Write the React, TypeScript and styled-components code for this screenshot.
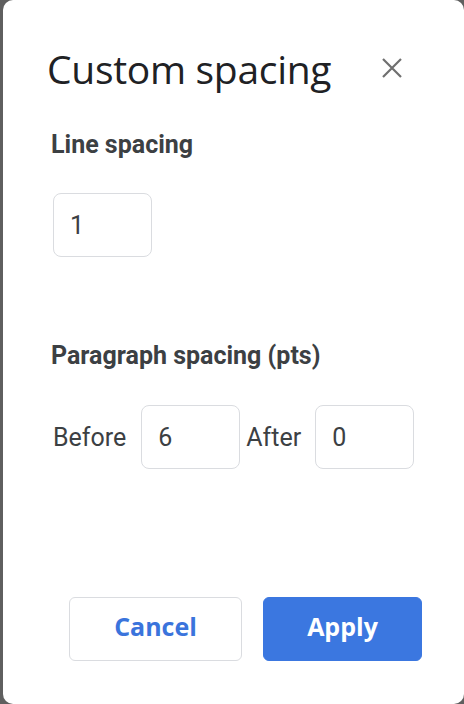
import React from 'react';
import styled, { createGlobalStyle } from 'styled-components';

const GlobalStyle = createGlobalStyle`
  html, body {
    margin: 0;
    padding: 0;
    background: #5f5f5f;
  }
  * {
    box-sizing: border-box;
  }
`;

const Backdrop = styled.div`
  display: flex;
  width: 464px;
  height: 704px;
  padding-left: 3px;
  background: #5f5f5f;
  overflow: hidden;
`;

const Dialog = styled.div`
  display: flex;
  flex-direction: column;
  width: 461px;
  height: 704px;
  background: #fff;
  border-radius: 10px;
  padding: 44px 0 0 44px;
  color: #3c4043;
  font-family: Roboto, 'Liberation Sans', sans-serif;
`;

const Header = styled.div`
  display: flex;
  align-items: center;
  justify-content: space-between;
  padding-right: 60px;
  height: 48px;
`;

const Title = styled.h1`
  margin: 0;
  font-family: 'Open Sans', sans-serif;
  font-weight: 400;
  font-size: 39px;
  color: #202124;
  letter-spacing: -0.3px;
`;

const CloseButton = styled.button`
  display: flex;
  border: none;
  background: none;
  padding: 0;
  cursor: pointer;
`;

const SectionLabel = styled.h2<{ $top: number }>`
  margin: ${p => p.$top}px 0 0 4px;
  font-size: 25px;
  font-weight: 700;
  line-height: 30px;
  color: #3c4043;
`;

const Row = styled.div<{ $top: number }>`
  display: flex;
  align-items: center;
  margin: ${p => p.$top}px 0 0 6px;
`;

const FieldLabel = styled.span<{ $gap: number }>`
  font-size: 25px;
  color: #3c4043;
  margin-right: ${p => p.$gap}px;
`;

const NumberBox = styled.input<{ $gap?: number }>`
  width: 99px;
  height: 64px;
  border: 1px solid #dadce0;
  border-radius: 8px;
  padding: 0 0 0 16px;
  font-family: Roboto, 'Liberation Sans', sans-serif;
  font-size: 25px;
  color: #3c4043;
  background: #fff;
  outline: none;
  margin-right: ${p => p.$gap ?? 0}px;
`;

const Footer = styled.div`
  display: flex;
  gap: 21px;
  margin: auto 0 43px 22px;
`;

const Button = styled.button<{ $primary?: boolean }>`
  height: 64px;
  width: ${p => (p.$primary ? 159 : 173)}px;
  border-radius: 6px;
  border: 1px solid ${p => (p.$primary ? '#3b77e0' : '#dadce0')};
  background: ${p => (p.$primary ? '#3b77e0' : '#fff')};
  color: ${p => (p.$primary ? '#fff' : '#3a74dc')};
  font-family: 'Open Sans', sans-serif;
  font-weight: 700;
  font-size: 25px;
  padding: 0 0 6px;
  cursor: pointer;
`;

const App = () => (
  <>
    <GlobalStyle />
    <Backdrop>
      <Dialog>
        <Header>
          <Title>Custom spacing</Title>
          <CloseButton aria-label="Close">
            <svg width="24" height="24" viewBox="0 0 24 24">
              <path d="M3 3L21 21M21 3L3 21" stroke="#6f6f6f" strokeWidth="2.2" fill="none" />
            </svg>
          </CloseButton>
        </Header>

        <SectionLabel $top={38}>Line spacing</SectionLabel>
        <Row $top={33}>
          <NumberBox defaultValue="1" />
        </Row>

        <SectionLabel $top={84}>Paragraph spacing (pts)</SectionLabel>
        <Row $top={34}>
          <FieldLabel $gap={15}>Before</FieldLabel>
          <NumberBox defaultValue="6" $gap={6} />
          <FieldLabel $gap={14}>After</FieldLabel>
          <NumberBox defaultValue="0" />
        </Row>

        <Footer>
          <Button>Cancel</Button>
          <Button $primary>Apply</Button>
        </Footer>
      </Dialog>
    </Backdrop>
  </>
);

export default App;
